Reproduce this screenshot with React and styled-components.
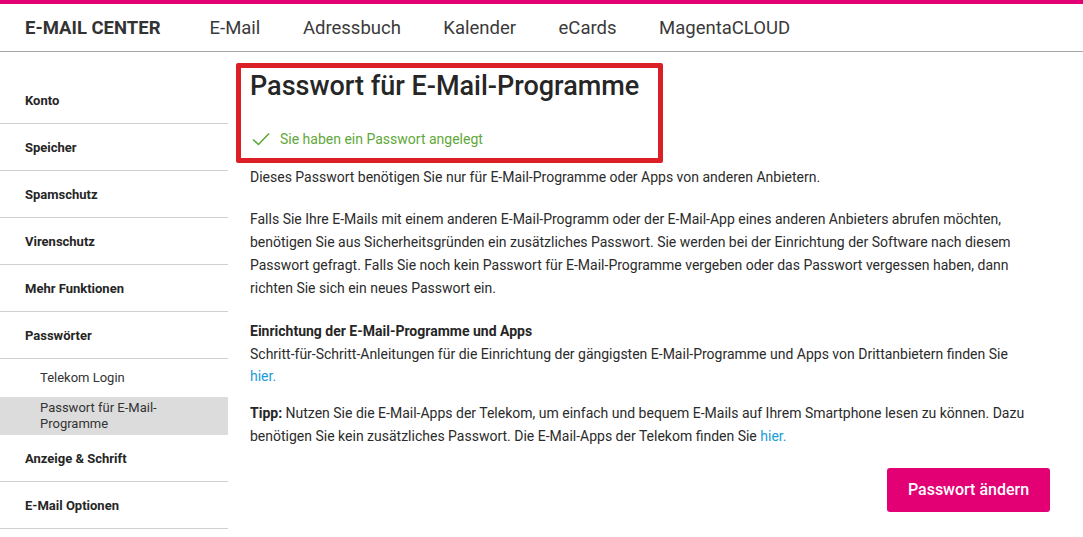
import React from "react";
import styled, { createGlobalStyle } from "styled-components";

const GlobalStyle = createGlobalStyle`
  body {
    margin: 0;
    font-family: Roboto, "Liberation Sans", Arial, sans-serif;
    color: #262626;
    background: #fff;
  }
`;

const Page = styled.div`
  width: 1083px;
  min-height: 537px;
  border-top: 4px solid #e20074;
  box-sizing: border-box;
`;

const Header = styled.header`
  height: 47px;
  display: flex;
  align-items: center;
  padding-left: 25px;
  border-bottom: 1px solid #a6a6a6;
`;

const Brand = styled.div`
  font-size: 18.5px;
  font-weight: 700;
  color: #333;
  margin-right: 49px;
`;

const NavItem = styled.a`
  font-size: 18.5px;
  color: #3a3a3a;
  margin-right: 42.5px;
  text-decoration: none;
`;

const Body = styled.div`
  display: flex;
  gap: 22px;
`;

const Sidebar = styled.nav`
  width: 228px;
  flex-shrink: 0;
  padding-top: 25px;
`;

const SideItem = styled.div`
  height: 47px;
  display: flex;
  align-items: center;
  padding-left: 25px;
  font-size: 13px;
  font-weight: 700;
  color: #262626;
  border-bottom: 1px solid #d0d0d0;
  box-sizing: border-box;
`;

const SubItem = styled.div`
  display: flex;
  align-items: center;
  padding: ${(p) => (p.$active ? "3px 40px" : "0 40px")};
  min-height: 38px;
  box-sizing: border-box;
  font-size: 13px;
  line-height: 16px;
  color: #333;
  background: ${(p) => (p.$active ? "#dcdcdc" : "transparent")};
`;

const Main = styled.main`
  flex: 1;
  padding: 18px 33px 0 0;
`;

const TitleBlock = styled.div`
  position: relative;
`;

const Frame = styled.div`
  position: absolute;
  left: -14px;
  top: -7px;
  width: 427px;
  height: 100px;
  border: 5px solid #da1f26;
  border-radius: 2px;
  box-sizing: border-box;
  pointer-events: none;
`;

const Title = styled.h1`
  margin: 0;
  font-size: 27px;
  line-height: 32px;
  font-weight: 500;
  color: #262626;
`;

const Success = styled.div`
  display: flex;
  align-items: center;
  gap: 10px;
  margin-top: 27px;
  padding-left: 2px;
  font-size: 14px;
  line-height: 20px;
  color: #61a83a;
`;

const Para = styled.p`
  max-width: 782px;
  margin: ${(p) => p.$mt || "0"} 0 0;
  font-size: 14px;
  line-height: ${(p) => p.$lh || "23px"};
  color: #2b2b2b;
`;

const Strong = styled.strong`
  font-weight: 700;
  color: #262626;
`;

const Link = styled.a`
  color: #1a9cd8;
  text-decoration: none;
`;

const Actions = styled.div`
  display: flex;
  justify-content: flex-end;
  margin-top: 20px;
`;

const Button = styled.button`
  width: 163px;
  height: 44px;
  border: none;
  border-radius: 3px;
  background: #e20074;
  color: #fff;
  font-family: inherit;
  font-size: 16px;
  font-weight: 500;
  cursor: pointer;
`;

const Check = () => (
  <svg width="18" height="14" viewBox="0 0 18 14" fill="none">
    <path d="M1 7.5 L6.5 12.5 L17 1.5" stroke="#61a83a" strokeWidth="1.6" />
  </svg>
);

const nav = ["E-Mail", "Adressbuch", "Kalender", "eCards", "MagentaCLOUD"];

export default function App() {
  return (
    <Page>
      <GlobalStyle />
      <Header>
        <Brand>E-MAIL CENTER</Brand>
        {nav.map((n) => (
          <NavItem key={n}>{n}</NavItem>
        ))}
      </Header>
      <Body>
        <Sidebar>
          <SideItem>Konto</SideItem>
          <SideItem>Speicher</SideItem>
          <SideItem>Spamschutz</SideItem>
          <SideItem>Virenschutz</SideItem>
          <SideItem>Mehr Funktionen</SideItem>
          <SideItem>Passwörter</SideItem>
          <SubItem>Telekom Login</SubItem>
          <SubItem $active>
            Passwort für E-Mail-
            <br />
            Programme
          </SubItem>
          <SideItem>Anzeige &amp; Schrift</SideItem>
          <SideItem>E-Mail Optionen</SideItem>
        </Sidebar>
        <Main>
          <TitleBlock>
            <Frame />
            <Title>Passwort für E-Mail-Programme</Title>
            <Success>
              <Check />
              Sie haben ein Passwort angelegt
            </Success>
          </TitleBlock>
          <Para $mt="17px">
            Dieses Passwort benötigen Sie nur für E-Mail-Programme oder Apps von anderen Anbietern.
          </Para>
          <Para $mt="19px">
            Falls Sie Ihre E-Mails mit einem anderen E-Mail-Programm oder der E-Mail-App eines anderen
            Anbieters abrufen möchten, benötigen Sie aus Sicherheitsgründen ein zusätzliches Passwort.
            Sie werden bei der Einrichtung der Software nach diesem Passwort gefragt. Falls Sie noch
            kein Passwort für E-Mail-Programme vergeben oder das Passwort vergessen haben, dann richten
            Sie sich ein neues Passwort ein.
          </Para>
          <Para $mt="20px" $lh="22.5px">
            <Strong>Einrichtung der E-Mail-Programme und Apps</Strong>
            <br />
            Schritt-für-Schritt-Anleitungen für die Einrichtung der gängigsten E-Mail-Programme und
            Apps von Drittanbietern finden Sie <Link href="#">hier.</Link>
          </Para>
          <Para $mt="14px">
            <Strong>Tipp:</Strong> Nutzen Sie die E-Mail-Apps der Telekom, um einfach und bequem
            E-Mails auf Ihrem Smartphone lesen zu können. Dazu benötigen Sie kein zusätzliches
            Passwort. Die E-Mail-Apps der Telekom finden Sie <Link href="#">hier.</Link>
          </Para>
          <Actions>
            <Button>Passwort ändern</Button>
          </Actions>
        </Main>
      </Body>
    </Page>
  );
}
